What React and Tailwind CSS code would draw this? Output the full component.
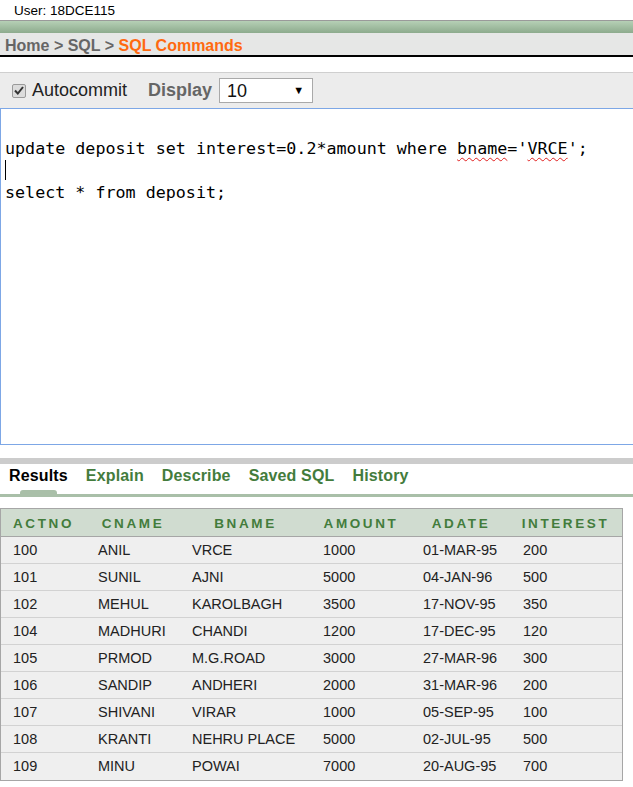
import React from "react";

const rows = [
  ["100", "ANIL", "VRCE", "1000", "01-MAR-95", "200"],
  ["101", "SUNIL", "AJNI", "5000", "04-JAN-96", "500"],
  ["102", "MEHUL", "KAROLBAGH", "3500", "17-NOV-95", "350"],
  ["104", "MADHURI", "CHANDI", "1200", "17-DEC-95", "120"],
  ["105", "PRMOD", "M.G.ROAD", "3000", "27-MAR-96", "300"],
  ["106", "SANDIP", "ANDHERI", "2000", "31-MAR-96", "200"],
  ["107", "SHIVANI", "VIRAR", "1000", "05-SEP-95", "100"],
  ["108", "KRANTI", "NEHRU PLACE", "5000", "02-JUL-95", "500"],
  ["109", "MINU", "POWAI", "7000", "20-AUG-95", "700"],
];

const headers = ["ACTNO", "CNAME", "BNAME", "AMOUNT", "ADATE", "INTEREST"];
const widths = ["w-[85px]", "w-[94px]", "w-[131px]", "w-[100px]", "w-[100px]", "w-[109px]"];

const squiggle =
  "underline decoration-wavy decoration-[#e02020] decoration-1 underline-offset-[3px]";

export default function App() {
  return (
    <div className="w-[633px] h-[787px] overflow-hidden bg-white font-['Liberation_Sans',Arial,sans-serif] text-[#222]">
      {/* user line */}
      <div className="h-[20px] pl-[14px] pt-[3px] text-[13.5px] leading-[15px] text-black">
        User: 18DCE115
      </div>

      {/* green bar */}
      <div className="h-[13px] border-t border-[#9a9a9a] bg-gradient-to-b from-[#b6d0b6] to-[#8dab8d]" />

      {/* breadcrumb */}
      <div className="h-[24px] bg-[#e6e7e6] border-b-2 border-black pl-[5px] pt-[1px] text-[16px] font-bold leading-[23px] text-[#666]">
        Home &gt; SQL &gt; <span className="text-[#ff6a10]">SQL Commands</span>
      </div>

      {/* toolbar */}
      <div className="mt-[15px] h-[36px] border-t border-[#cfcfcf] bg-[#ececec] flex items-center">
        <span className="ml-[12px] w-[14px] h-[14px] rounded-[2px] border border-[#9a9a9a] bg-[#dcdcdc] flex items-center justify-center">
          <svg width="10" height="9" viewBox="0 0 10 9">
            <path d="M1 4.5 L3.8 7.5 L9 1" fill="none" stroke="#333" strokeWidth="2" />
          </svg>
        </span>
        <span className="ml-[6px] text-[18px] text-[#222]">Autocommit</span>
        <span className="ml-[21px] text-[18px] font-bold text-[#666]">Display</span>
        <div className="ml-[7px] w-[94px] h-[25px] border border-[#a9a9a9] bg-white flex items-center justify-between pl-[7px] pr-[8px]">
          <span className="text-[18px] leading-none text-[#111]">10</span>
          <span className="text-[11px] leading-none text-black">▼</span>
        </div>
      </div>

      {/* editor */}
      <div className="h-[337px] w-[640px] border border-[#7da7e6] bg-white pl-[4px] pt-[28px] font-['DejaVu_Sans_Mono',monospace] text-[16.7px] leading-[22px] text-black whitespace-pre">
        <div>
          update deposit set interest=0.2*amount where <span className={squiggle}>bname</span>='<span className={squiggle}>VRCE</span>';
        </div>
        <div className="h-[22px] flex items-center">
          <span className="w-px h-[20px] bg-black" />
        </div>
        <div>select * from deposit;</div>
      </div>

      {/* tabs */}
      <div className="mt-[13px] h-[6px] bg-[#cccccc]" />
      <div className="relative h-[30px] flex items-start pl-[9px] pt-[3px] gap-[18px] text-[16px] font-bold leading-[18px] tracking-[0.15px]">
        <span className="text-black">Results</span>
        <span className="text-[#437c3c]">Explain</span>
        <span className="text-[#437c3c]">Describe</span>
        <span className="text-[#437c3c]">Saved SQL</span>
        <span className="text-[#437c3c]">History</span>
        <span className="absolute left-[20px] bottom-0 w-[37px] h-[4px] rounded-t-[3px] bg-[#a9bfa8]" />
      </div>
      <div className="h-[3px] bg-[#a9bfa8]" />

      {/* results table */}
      <div className="mt-[11px] w-[623px] border border-[#a6a6a6]">
        <div className="flex h-[28px] items-center pt-[3px] bg-[#d0dcd0] border-b border-[#a6a6a6] text-[13.5px] font-bold tracking-[2.6px] text-[#437c3c]">
          {headers.map((h, i) => (
            <div key={h} className={`${widths[i]} text-center`}>
              {h}
            </div>
          ))}
        </div>
        {rows.map((r, ri) => (
          <div
            key={r[0]}
            className={`flex h-[27px] items-center bg-[#efefef] text-[14.5px] text-[#222] ${
              ri < rows.length - 1 ? "border-b border-[#d2d2d2]" : ""
            }`}
          >
            {r.map((c, i) => (
              <div key={i} className={`${widths[i]} pl-[12px] pt-[1px] whitespace-nowrap`}>
                {c}
              </div>
            ))}
          </div>
        ))}
      </div>
    </div>
  );
}
